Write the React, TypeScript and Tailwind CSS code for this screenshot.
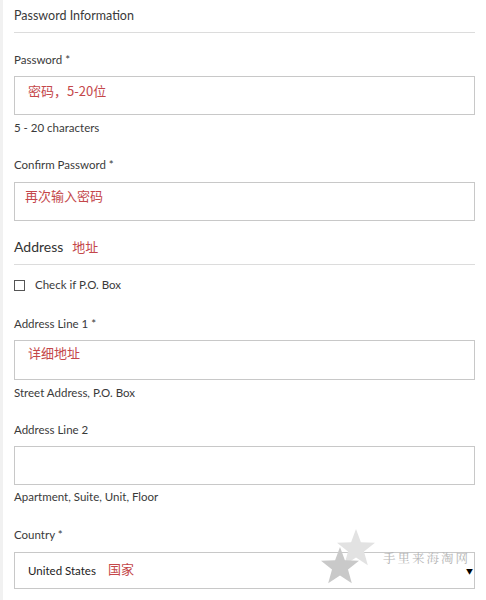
import React from "react";

const font = { fontFamily: "Lato, 'Noto Sans CJK SC', sans-serif" };

function Label({ children, className = "" }: { children: React.ReactNode; className?: string }) {
  return <div className={`text-[11.5px] leading-[16px] text-[#3a3a3a] ${className}`}>{children}</div>;
}

function Red({ children, className = "" }: { children: React.ReactNode; className?: string }) {
  return (
    <span
      className={`inline-block align-top text-[13px] leading-[16px] text-[#c4474a] ${className}`}
      style={{ fontFamily: "'Noto Sans CJK SC', Lato, sans-serif" }}
    >
      {children}
    </span>
  );
}

function Star({ x, y, r, fill }: { x: number; y: number; r: number; fill: string }) {
  const pts: string[] = [];
  for (let i = 0; i < 10; i++) {
    const ang = -Math.PI / 2 + (i * Math.PI) / 5;
    const rad = i % 2 === 0 ? r : r * 0.42;
    pts.push(`${(x + rad * Math.cos(ang)).toFixed(1)},${(y + rad * Math.sin(ang)).toFixed(1)}`);
  }
  return <polygon points={pts.join(" ")} fill={fill} />;
}

export default function App() {
  return (
    <div className="w-[486px] h-[600px] bg-white flex overflow-hidden" style={font}>
      <div className="w-[3px] bg-[#f1f1f1]" />
      <div className="flex-1 pl-[11px] pr-[11px] flex flex-col">
        <div className="pt-[6px] pb-[6px] border-b border-[#dcdcdc] text-[12.5px] leading-[20px] text-[#3a3a3a]">
          Password Information
        </div>

        <Label className="mt-[19px]">Password *</Label>
        <div className="mt-[8px] h-[39px] border border-[#c8c8c8] pl-[13px] pt-[6px] leading-[16px]">
          <Red>密码，5-20位</Red>
        </div>
        <Label className="mt-[5px]">5 - 20 characters</Label>

        <Label className="mt-[21px]">Confirm Password *</Label>
        <div className="mt-[9px] h-[39px] border border-[#c8c8c8] pl-[10px] pt-[5px] leading-[16px]">
          <Red>再次输入密码</Red>
        </div>

        <div className="mt-[16px] pb-[7px] border-b border-[#dcdcdc] flex items-center h-[28px]">
          <span className="text-[14px] leading-[20px] text-[#333]">Address</span>
          <Red className="ml-[9px]">地址</Red>
        </div>

        <div className="mt-[12px] flex items-center h-[16px]">
          <div className="w-[11px] h-[11px] border border-[#555] bg-white" />
          <span className="ml-[10px] text-[11.5px] leading-[16px] text-[#3a3a3a]">Check if P.O. Box</span>
        </div>

        <Label className="mt-[23px]">Address Line 1 *</Label>
        <div className="mt-[8px] h-[40px] border border-[#c8c8c8] pl-[13px] pt-[4px] leading-[16px]">
          <Red>详细地址</Red>
        </div>
        <Label className="mt-[5px]">Street Address, P.O. Box</Label>

        <Label className="mt-[21px]">Address Line 2</Label>
        <div className="mt-[8px] h-[39px] border border-[#c8c8c8]" />
        <Label className="mt-[4px]">Apartment, Suite, Unit, Floor</Label>

        <Label className="mt-[22px]">Country *</Label>
        <div className="relative mt-[9px] h-[37px] border border-[#c8c8c8] flex items-center pl-[13px] leading-[16px]">
          <span className="text-[11.5px] leading-[16px] text-[#222]">United States</span>
          <Red className="ml-[12px] mt-[-3px]">国家</Red>
          <svg className="absolute left-[304px] top-[-28px]" width="70" height="70" viewBox="0 0 70 70">
            <Star x={37} y={24} r={20} fill="#e2e2e2" />
            <Star x={21} y={42} r={20} fill="#c9c9c9" />
          </svg>
          <span
            className="absolute left-[368px] top-[-3px] whitespace-nowrap text-[12.5px] leading-[16px] tracking-[2px] text-[#b5b5b5]"
            style={{ fontFamily: "'Noto Serif CJK SC', 'Noto Sans CJK SC', serif" }}
          >
            手里来海淘网
          </span>
          <span className="absolute left-[451px] top-[14px] text-[7px] leading-[8px] text-black">▼</span>
        </div>
      </div>
    </div>
  );
}
